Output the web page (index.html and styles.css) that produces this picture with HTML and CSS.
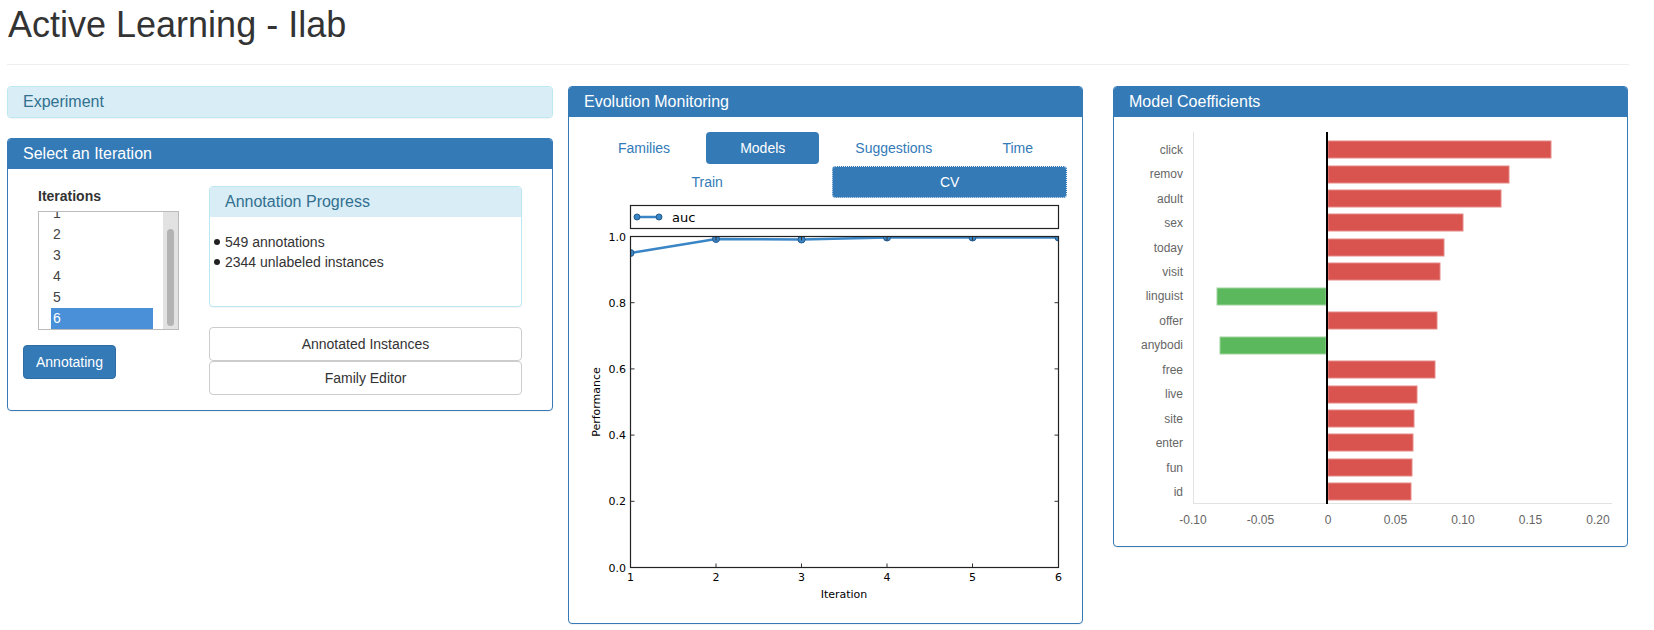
FILE: index.html
```html
<!DOCTYPE html>
<html lang="en">
  <head>
    <meta charset="UTF-8" />
    <meta name="viewport" content="width=device-width, initial-scale=1.0" />
    <title>Active Learning - Ilab</title>
    <link rel="stylesheet" href="styles.css">
  </head>
  <body>
    <div class="page">
      <div class="page-header">
        <h1>Active Learning - Ilab</h1>
      </div>

      <div class="columns">
        <div class="col col-left">
          <div class="panel panel-info panel-collapsed">
            <div class="panel-heading">Experiment</div>
          </div>

          <div class="panel panel-primary">
            <div class="panel-heading">Select an Iteration</div>
            <div class="panel-body iteration-body">
              <div class="iteration-left">
                <div class="iterations">
                  <label>Iterations</label>
                  <div class="listbox">
                    <div class="list-items">
                      <div class="option">1</div>
                      <div class="option">2</div>
                      <div class="option">3</div>
                      <div class="option">4</div>
                      <div class="option">5</div>
                      <div class="option selected">6</div>
                    </div>
                    <div class="scrollbar"><div class="thumb"></div></div>
                  </div>
                </div>
                <button class="btn btn-primary annotating">Annotating</button>
              </div>
              <div class="iteration-right">
                <div class="panel panel-info">
                  <div class="panel-heading">Annotation Progress</div>
                  <div class="panel-body progress-body">
                    <ul>
                      <li>549 annotations</li>
                      <li>2344 unlabeled instances</li>
                    </ul>
                  </div>
                </div>
                <button class="btn btn-default btn-block">Annotated Instances</button>
                <button class="btn btn-default btn-block">Family Editor</button>
              </div>
            </div>
          </div>
        </div>

        <div class="col col-middle">
          <div class="panel panel-primary">
            <div class="panel-heading">Evolution Monitoring</div>
            <div class="panel-body">
              <ul class="nav-pills">
                <li>Families</li>
                <li class="active">Models</li>
                <li>Suggestions</li>
                <li>Time</li>
              </ul>
              <ul class="nav-pills sub-pills">
                <li>Train</li>
                <li class="active focused">CV</li>
              </ul>
              <svg class="perf-chart" width="483" height="410" viewBox="0 0 483 410">
                <defs>
                  <clipPath id="plot-area">
                    <rect x="46.5" y="38.5" width="428" height="331" />
                  </clipPath>
                </defs>
                <rect class="legend-box" x="46.5" y="7.5" width="428" height="23" />
                <line class="series" x1="53" y1="19" x2="75" y2="19" />
                <circle class="marker" cx="53" cy="19" r="3" />
                <circle class="marker" cx="75" cy="19" r="3" />
                <text class="legend-text" x="88" y="23.5">auc</text>

                <g clip-path="url(#plot-area)">
                  <polyline class="series" points="46.5,55 132,41 217.5,41.5 303,39.5 388.5,39.5 474.5,39.5" />
                  <circle class="marker" cx="46.5" cy="55" r="3.5" />
                  <circle class="marker" cx="132" cy="41" r="3.5" />
                  <circle class="marker" cx="217.5" cy="41.5" r="3.5" />
                  <circle class="marker" cx="303" cy="39.5" r="3.5" />
                  <circle class="marker" cx="388.5" cy="39.5" r="3.5" />
                  <circle class="marker" cx="474.5" cy="39.5" r="3.5" />
                </g>

                <g class="ticks">
                  <line x1="46.5" y1="104.7" x2="50.5" y2="104.7" />
                  <line x1="46.5" y1="170.9" x2="50.5" y2="170.9" />
                  <line x1="46.5" y1="237.1" x2="50.5" y2="237.1" />
                  <line x1="46.5" y1="303.3" x2="50.5" y2="303.3" />
                  <line x1="470.5" y1="104.7" x2="474.5" y2="104.7" />
                  <line x1="470.5" y1="170.9" x2="474.5" y2="170.9" />
                  <line x1="470.5" y1="237.1" x2="474.5" y2="237.1" />
                  <line x1="470.5" y1="303.3" x2="474.5" y2="303.3" />
                  <line x1="132" y1="369.5" x2="132" y2="365.5" />
                  <line x1="217.5" y1="369.5" x2="217.5" y2="365.5" />
                  <line x1="303" y1="369.5" x2="303" y2="365.5" />
                  <line x1="388.5" y1="369.5" x2="388.5" y2="365.5" />
                  <line x1="132" y1="38.5" x2="132" y2="42.5" />
                  <line x1="217.5" y1="38.5" x2="217.5" y2="42.5" />
                  <line x1="303" y1="38.5" x2="303" y2="42.5" />
                  <line x1="388.5" y1="38.5" x2="388.5" y2="42.5" />
                </g>
                <rect class="frame" x="46.5" y="38.5" width="428" height="331" />

                <g class="tick-text y-ticks">
                  <text x="42" y="42.5">1.0</text>
                  <text x="42" y="108.7">0.8</text>
                  <text x="42" y="174.9">0.6</text>
                  <text x="42" y="241.1">0.4</text>
                  <text x="42" y="307.3">0.2</text>
                  <text x="42" y="373.5">0.0</text>
                </g>
                <g class="tick-text x-ticks">
                  <text x="46.5" y="383">1</text>
                  <text x="132" y="383">2</text>
                  <text x="217.5" y="383">3</text>
                  <text x="303" y="383">4</text>
                  <text x="388.5" y="383">5</text>
                  <text x="474.5" y="383">6</text>
                </g>
                <text class="axis-label" x="260" y="400">Iteration</text>
                <text class="axis-label" transform="translate(16 204) rotate(-90)">Performance</text>
              </svg>
            </div>
          </div>
        </div>

        <div class="col col-right">
          <div class="panel panel-primary">
            <div class="panel-heading">Model Coefficients</div>
            <div class="panel-body">
              <svg class="coef-chart" width="483" height="399" viewBox="0 0 483 399">
                <line class="grid-line" x1="64.5" y1="0" x2="64.5" y2="372" />
                <line class="grid-line" x1="64" y1="371.5" x2="483" y2="371.5" />

                <g class="coef-labels">
                  <text x="54" y="22">click</text>
                  <text x="54" y="46">remov</text>
                  <text x="54" y="70.5">adult</text>
                  <text x="54" y="95">sex</text>
                  <text x="54" y="119.5">today</text>
                  <text x="54" y="144">visit</text>
                  <text x="54" y="168">linguist</text>
                  <text x="54" y="193">offer</text>
                  <text x="54" y="217">anybodi</text>
                  <text x="54" y="242">free</text>
                  <text x="54" y="266">live</text>
                  <text x="54" y="290.5">site</text>
                  <text x="54" y="315">enter</text>
                  <text x="54" y="339.5">fun</text>
                  <text x="54" y="364">id</text>
                </g>

                <rect class="bar-pos" x="199" y="9" width="223" height="17" />
                <rect class="bar-pos" x="199" y="34" width="181" height="17" />
                <rect class="bar-pos" x="199" y="58" width="173" height="17" />
                <rect class="bar-pos" x="199" y="82" width="135" height="17" />
                <rect class="bar-pos" x="199" y="107" width="116" height="17" />
                <rect class="bar-pos" x="199" y="131" width="112" height="17" />
                <rect class="bar-neg" x="88" y="156" width="109" height="17" />
                <rect class="bar-pos" x="199" y="180" width="109" height="17" />
                <rect class="bar-neg" x="91" y="205" width="106" height="17" />
                <rect class="bar-pos" x="199" y="229" width="107" height="17" />
                <rect class="bar-pos" x="199" y="254" width="89" height="17" />
                <rect class="bar-pos" x="199" y="278" width="86" height="17" />
                <rect class="bar-pos" x="199" y="302" width="85" height="17" />
                <rect class="bar-pos" x="199" y="327" width="84" height="17" />
                <rect class="bar-pos" x="199" y="351" width="83" height="17" />

                <rect class="zero-line" x="197" y="0" width="2" height="372" />

                <g class="coef-ticks">
                  <text x="64" y="391.5">-0.10</text>
                  <text x="131.5" y="391.5">-0.05</text>
                  <text x="199" y="391.5">0</text>
                  <text x="266.5" y="391.5">0.05</text>
                  <text x="334" y="391.5">0.10</text>
                  <text x="401.5" y="391.5">0.15</text>
                  <text x="469" y="391.5">0.20</text>
                </g>
              </svg>
            </div>
          </div>
        </div>
      </div>
    </div>
  </body>
</html>
```

FILE: styles.css
```css
body {
  margin: 0;
  background: #fff;
  color: #333;
  font-family: "Liberation Sans", Arial, sans-serif;
  font-size: 14px;
  line-height: 20px;
}
.page {
  width: 1622px;
  margin-left: 7px;
}
.page-header {
  padding-bottom: 9px;
  margin-bottom: 21px;
  border-bottom: 1px solid #eee;
}
.page-header h1 {
  margin: 5px 0 10px 1px;
  font-size: 36px;
  font-weight: normal;
  line-height: 39.6px;
}
.columns {
  display: flex;
  align-items: flex-start;
}
.col-left {
  width: 546px;
}
.col-middle {
  width: 515px;
  margin-left: 15px;
}
.col-right {
  width: 515px;
  margin-left: 30px;
}

/* panels */
.panel {
  background: #fff;
  border: 1px solid transparent;
  border-radius: 4px;
  box-shadow: 0 1px 1px rgba(0, 0, 0, 0.05);
  margin-bottom: 20px;
}
.panel-heading {
  padding: 6px 15px;
  font-size: 16px;
  line-height: 18px;
  border-radius: 3px 3px 0 0;
}
.panel-collapsed .panel-heading {
  border-radius: 3px;
}
.panel-info {
  border-color: #bce8f1;
}
.panel-info > .panel-heading {
  background: #d9edf7;
  color: #31708f;
}
.panel-primary {
  border-color: #337ab7;
}
.panel-primary > .panel-heading {
  background: #337ab7;
  color: #fff;
}
.panel-body {
  padding: 15px;
}

/* select an iteration */
.iteration-body {
  display: grid;
  grid-template-columns: 186px 313px;
  padding-top: 17px;
}
.iterations {
  margin-left: 15px;
}
.iterations label {
  display: block;
  font-weight: bold;
  margin-bottom: 5px;
}
.listbox {
  display: flex;
  width: 141px;
  height: 119px;
  box-sizing: border-box;
  border: 1px solid #bbb;
}
.list-items {
  flex: 1;
  display: flex;
  flex-direction: column;
  justify-content: flex-end;
  overflow: hidden;
  padding: 0 10px 0 12px;
}
.option {
  flex: none;
  height: 21px;
  line-height: 21px;
  padding-left: 2px;
  color: #444;
}
.option.selected {
  background: #4a90d9;
  color: #fff;
}
.scrollbar {
  width: 15px;
  background: #e2e2e2;
  display: flex;
  justify-content: center;
  padding: 17px 0 3px;
  box-sizing: border-box;
}
.thumb {
  width: 7px;
  border-radius: 4px;
  background: #b3b3b3;
}
.btn {
  display: inline-block;
  padding: 6px 12px;
  font-family: inherit;
  font-size: 14px;
  line-height: 20px;
  text-align: center;
  border: 1px solid transparent;
  border-radius: 4px;
  cursor: pointer;
}
.btn-primary {
  background: #337ab7;
  border-color: #2e6da4;
  color: #fff;
}
.btn-default {
  background: #fff;
  border-color: #ccc;
  color: #333;
}
.btn-block {
  display: block;
  width: 100%;
}
.annotating {
  margin-top: 15px;
}
.progress-body {
  height: 89px;
  box-sizing: border-box;
}
.progress-body ul {
  margin: 0;
  padding: 0;
  list-style: none;
}
.progress-body li::before {
  content: "";
  display: inline-block;
  width: 6px;
  height: 6px;
  margin: 0 5px 1px -11px;
  border-radius: 50%;
  background: #222;
  vertical-align: middle;
}

/* evolution monitoring */
.nav-pills {
  display: flex;
  gap: 2px;
  margin: 0;
  padding: 0;
  list-style: none;
}
.nav-pills li {
  flex: 1 1 auto;
  padding: 6px 15px;
  text-align: center;
  color: #337ab7;
  border-radius: 4px;
}
.nav-pills li.active {
  background: #337ab7;
  color: #fff;
}
.nav-pills li.focused {
  outline: 1px dotted #e8eef5;
  outline-offset: -1px;
}
.sub-pills {
  margin-top: 2px;
}
.perf-chart,
.coef-chart {
  display: block;
}
.perf-chart text {
  font-family: "DejaVu Sans", sans-serif;
  fill: #000;
}
.legend-box,
.frame {
  fill: none;
  stroke: #222;
  stroke-width: 1.2;
}
.legend-box {
  fill: #fff;
}
.series {
  fill: none;
  stroke: #3a85c6;
  stroke-width: 2.5;
}
.marker {
  fill: #3a85c6;
  stroke: #24588c;
  stroke-width: 1;
}
.legend-text {
  font-size: 13px;
}
.ticks line {
  stroke: #333;
  stroke-width: 1;
}
.tick-text {
  font-size: 11px;
}
.y-ticks {
  text-anchor: end;
}
.x-ticks,
.axis-label {
  text-anchor: middle;
}
.axis-label {
  font-size: 11px;
}

/* model coefficients */
.coef-chart text {
  font-family: "Liberation Sans", Arial, sans-serif;
  font-size: 12px;
  fill: #666;
}
.coef-labels {
  text-anchor: end;
}
.coef-ticks {
  text-anchor: middle;
}
.grid-line {
  stroke: #e2e2e2;
  stroke-width: 1;
}
.zero-line {
  fill: #000;
}
.bar-pos {
  fill: #d9534f;
  stroke: #e58a87;
  stroke-width: 1;
}
.bar-neg {
  fill: #5cb85c;
  stroke: #9dd49d;
  stroke-width: 1;
}
```
